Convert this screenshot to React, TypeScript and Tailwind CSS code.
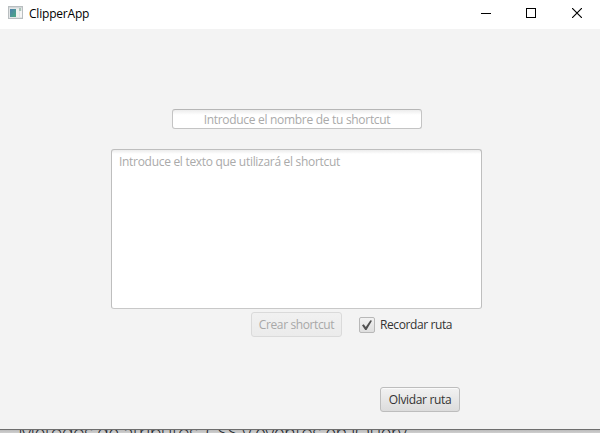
import React from "react";

function AppIcon() {
  return (
    <svg width="16" height="14" viewBox="0 0 16 14" className="block" shapeRendering="crispEdges">
      <defs>
        <linearGradient id="screen" x1="0" y1="0" x2="1" y2="1">
          <stop offset="0" stopColor="#4d7fae" />
          <stop offset="1" stopColor="#4caa82" />
        </linearGradient>
      </defs>
      <rect x="0.5" y="0.5" width="14" height="12" fill="#e3e6e7" stroke="#b9bec0" />
      <rect x="1" y="1" width="13" height="1" fill="#d3d7d9" />
      <rect x="2" y="3" width="6" height="8" fill="url(#screen)" />
      <rect x="8" y="3" width="3" height="8" fill="#f1f2ef" />
      <rect x="11" y="2" width="2" height="3" fill="#a9c6b8" />
      <rect x="12" y="5" width="2" height="6" fill="#f6f6f6" />
    </svg>
  );
}

function TitleBar() {
  return (
    <header className="flex h-[29px] items-start bg-white pl-2">
      <div className="pt-[6px]"><AppIcon /></div>
      <h1 className="ml-[5px] mt-[5px] flex-1 whitespace-nowrap text-[12px] leading-[17px] tracking-[-0.2px] text-black">ClipperApp</h1>
      <div className="flex h-[26px] items-center pr-[18px] text-black">
        <svg width="10" height="10" viewBox="0 0 10 10" className="mr-[35px]" shapeRendering="crispEdges">
          <path d="M0 5.5H10" stroke="currentColor" />
        </svg>
        <svg width="10" height="10" viewBox="0 0 10 10" className="mr-9" shapeRendering="crispEdges">
          <path d="M.5 .5H9.5V9.5H.5Z" fill="none" stroke="currentColor" />
        </svg>
        <svg width="10" height="10" viewBox="0 0 10 10">
          <path d="M0 0L10 10M10 0L0 10" stroke="currentColor" strokeWidth="1.15" />
        </svg>
      </div>
    </header>
  );
}

export default function App() {
  return (
    <div className="flex h-[433px] w-[600px] flex-col overflow-hidden bg-[#c8c8c8] font-['Open_Sans','Noto_Sans',sans-serif]">
      <div className="flex h-[430px] shrink-0 flex-col border-b border-[#6e6e6e] bg-[#f3f3f3]">
        <TitleBar />
        <main className="flex flex-1 flex-col">
          <div className="ml-[172px] mt-20 flex h-5 w-[250px] items-start justify-center whitespace-nowrap rounded-[3px] border border-[#c4c4c4] border-t-[#b6b6b6] bg-white bg-[linear-gradient(#ededed,#ffffff_5px)] pt-px text-[12px] leading-[18px] tracking-[-0.3px] text-[#aaaaaa]">
            Introduce el nombre de tu shortcut
          </div>
          <div className="ml-[111px] mt-5 h-40 w-[371px] whitespace-nowrap rounded-[3px] border border-[#bebebe] border-b-[#c8c8c8] bg-white bg-[linear-gradient(#ececec,#ffffff_4px)] pl-[7px] pt-[3px] text-[12px] leading-[18px] tracking-[-0.3px] text-[#aaaaaa]">
            Introduce el texto que utilizará el shortcut
          </div>
          <div className="ml-[251px] mt-[3px] flex h-[25px] items-center text-[12px]">
            <button className="flex h-[25px] w-[91px] items-center justify-center whitespace-nowrap rounded-[3px] border border-[#dadada] bg-[linear-gradient(#f1f1f1,#ebebeb)] pt-px tracking-[-0.38px] text-[#a8a8a8]">
              Crear shortcut
            </button>
            <label className="ml-[17px] flex items-center whitespace-nowrap tracking-[-0.4px] text-[#333333]">
              <span className="mr-[5px] mt-px flex h-4 w-4 items-center justify-center rounded-[2px] border border-[#b8b8b8] bg-[linear-gradient(#f2f2f2,#dedede)]">
                <svg width="12" height="12" viewBox="0 0 12 12">
                  <path d="M1 6.2L2.7 5.2L4.8 8L9.4 1.2L11 1.7L5.5 11H4.2Z" fill="#505050" />
                </svg>
              </span>
              <span className="pt-px">Recordar ruta</span>
            </label>
          </div>
          <button className="ml-[380px] mt-[50px] flex h-[25px] w-20 items-center justify-center whitespace-nowrap rounded-[3px] border border-[#bdbdbd] bg-[linear-gradient(#f2f2f2,#dcdcdc)] pt-px text-[12px] tracking-[-0.35px] text-[#333333] shadow-[inset_0_1px_0_#fafafa]">
            Olvidar ruta
          </button>
        </main>
      </div>
      <div className="h-[3px] shrink-0 overflow-hidden whitespace-nowrap bg-[linear-gradient(#bcbcbc,#cfcfcf)] pl-[18px]">
        <p className="-mt-[9px] text-[20px] font-light leading-[24px] tracking-[-0.72px] text-[#22262d]">Métodos de atributos, CSS y eventos en jQuery</p>
      </div>
    </div>
  );
}
